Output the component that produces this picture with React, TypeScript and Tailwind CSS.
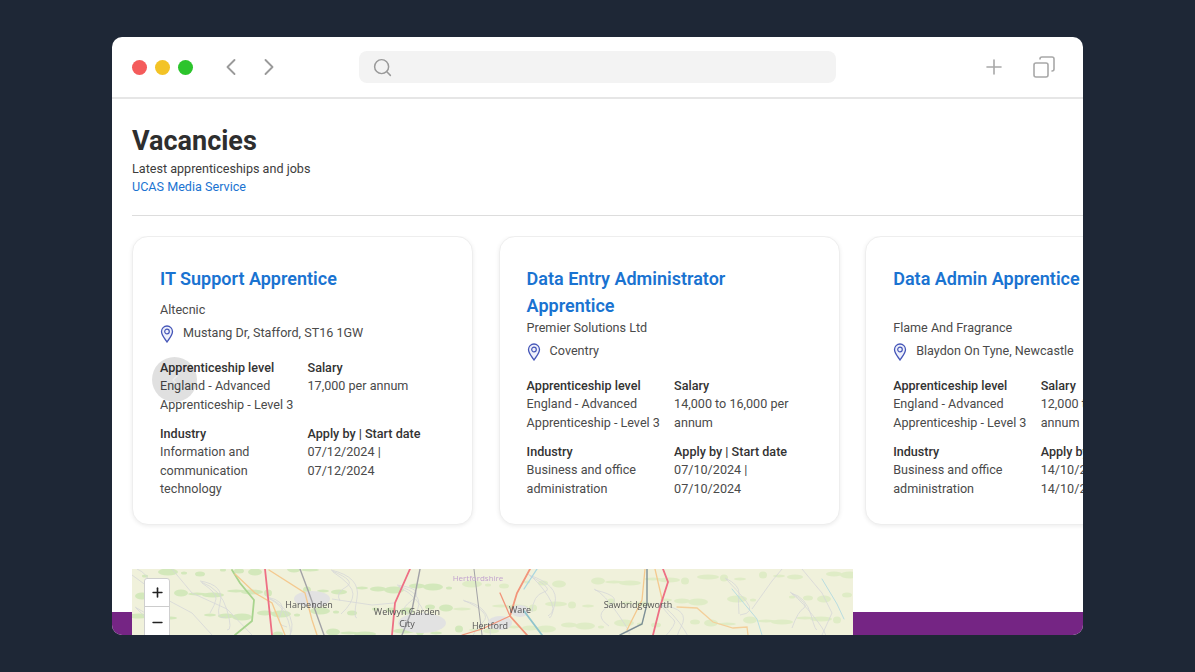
import { ChevronLeft, ChevronRight, Copy, Minus, Plus, Search } from 'lucide-react';

const vacancies = [
  {
    title: 'IT Support Apprentice',
    company: 'Altecnic',
    companyGap: 'mt-[9px]',
    location: 'Mustang Dr, Stafford, ST16 1GW',
    salary: '17,000 per annum',
    industry: 'Information and communication technology',
    dates: '07/12/2024 | 07/12/2024',
  },
  {
    title: 'Data Entry Administrator Apprentice',
    company: 'Premier Solutions Ltd',
    companyGap: 'mt-0',
    location: 'Coventry',
    salary: '14,000 to 16,000 per annum',
    industry: 'Business and office administration',
    dates: '07/10/2024 | 07/10/2024',
  },
  {
    title: 'Data Admin Apprentice',
    company: 'Flame And Fragrance',
    companyGap: 'mt-[27px]',
    location: 'Blaydon On Tyne, Newcastle',
    salary: '12,000 to 14,000 per annum',
    industry: 'Business and office administration',
    dates: '14/10/2024 | 14/10/2024',
  },
];

function PinIcon() {
  return (
    <svg width="14" height="18" viewBox="0 0 14 18" fill="none" className="shrink-0">
      <path
        d="M7 17C5.6 14.6 1.5 10.6 1.5 6.6C1.5 3.4 4 1 7 1s5.500 2.400 5.500 5.600C12.500 10.600 8.400 14.600 7 17Z"
        stroke="#4556b8"
        strokeWidth="1.300"
        fill="#eef0fb"
      />
      <circle cx="7" cy="6.500" r="2.300" stroke="#4556b8" strokeWidth="1.200" />
    </svg>
  );
}

function Field({ label, value }: { label: string; value: string }) {
  return (
    <div>
      <div className="font-medium text-[#333333]">{label}</div>
      <div className="text-[#4a4a4a]">{value}</div>
    </div>
  );
}

function VacancyCard({ vacancy }: { vacancy: (typeof vacancies)[number] }) {
  return (
    <div className="w-[341px] h-[289px] shrink-0 rounded-[16px] bg-white border border-[#eeeeee] shadow-[0_1px_4px_rgba(0,0,0,0.08)] px-[27px] pt-[28px] text-[12.6px] leading-[18.4px]">
      <h2 className="text-[18px] leading-[27px] font-semibold text-[#1a73d1]">{vacancy.title}</h2>
      <div className={`${vacancy.companyGap} text-[#4a4a4a]`}>{vacancy.company}</div>
      <div className="mt-[5px] flex items-center gap-[9px] text-[#4a4a4a]">
        <PinIcon />
        <span>{vacancy.location}</span>
      </div>
      <div className="mt-[16px] grid grid-cols-2 gap-x-[10px] gap-y-[11px]">
        <Field label="Apprenticeship level" value="England - Advanced Apprenticeship - Level 3" />
        <Field label="Salary" value={vacancy.salary} />
        <Field label="Industry" value={vacancy.industry} />
        <Field label="Apply by | Start date" value={vacancy.dates} />
      </div>
    </div>
  );
}

// scattered woodland specks, fixed so the tile is the same every render
const patches = Array.from({ length: 110 }, (_, i) => ({
  cx: (i * 97 + 13) % 721,
  cy: (i * 41 + 7) % 66,
  rx: 3 + (i * 7) % 9,
  ry: 1.5 + (i * 5) % 3,
  denser: (i * 97 + 13) % 721 < 330,
}));

const lanes = Array.from({ length: 30 }, (_, i) => {
  const x = (i * 131 + 5) % 721;
  const y = (i * 29) % 40;
  return `M${x} ${y}q${10 + (i % 5) * 5} ${4 + (i % 4) * 3} ${14 + (i % 3) * 6} ${16 + (i % 3) * 6}t${6 - (i % 4) * 6} ${14 + (i % 2) * 6}`;
});

function MapTile() {
  return (
    <svg viewBox="0 0 721 66" className="block w-full h-full" preserveAspectRatio="none">
      <rect width="721" height="66" fill="#f0f1db" />
      {patches.map((p) => (
        <ellipse key={`${p.cx}-${p.cy}`} cx={p.cx} cy={p.cy} rx={p.rx} ry={p.ry} fill={p.denser ? '#d3e8bb' : '#dfecc6'} />
      ))}
      <g fill="none" stroke="#d6d7d8" strokeWidth="0.800">
        {lanes.map((d) => (
          <path key={d} d={d} />
        ))}
        <path d="M0 6L30 28L60 44L80 66" />
        <path d="M40 0L60 24L95 40L120 66" />
        <path d="M200 30L240 36L262 34" />
        <path d="M620 40L640 12L650 0" />
        <path d="M670 0L690 24L700 44L690 66" />
      </g>
      <ellipse cx="180" cy="30" rx="18" ry="8" fill="#e2e2e2" />
      <ellipse cx="290" cy="54" rx="24" ry="10" fill="#e2e2e2" />
      <ellipse cx="368" cy="54" rx="12" ry="7" fill="#e2e2e2" />
      <ellipse cx="388" cy="42" rx="9" ry="6" fill="#e2e2e2" />
      <g fill="none" strokeLinecap="round">
        <path d="M100 1L108 14L122 31L120 52L103 66" stroke="#a8d48e" strokeWidth="1.800" />
        <path d="M103 5L123 24L140 34L153 66" stroke="#f4c98f" strokeWidth="1.300" />
        <path d="M137 1L173 24L180 51L185 66" stroke="#f4c98f" strokeWidth="1.300" />
        <path d="M168 0L177 24L192 66" stroke="#a2a2a6" strokeWidth="1.400" />
        <path d="M288 0L280 41L270 66" stroke="#a2a2a6" strokeWidth="1.400" />
        <path d="M133 0L140 66" stroke="#ee6f84" strokeWidth="1.800" />
        <path d="M278 0L263 34L260 66" stroke="#ee6f84" strokeWidth="1.800" />
        <path d="M342 0L350 66" stroke="#a2a2a6" strokeWidth="1" />
        <path d="M398 0L385 24L378 47L395 66" stroke="#f2957a" strokeWidth="1.800" />
        <path d="M368 24L378 47L350 60L330 66" stroke="#f2957a" strokeWidth="1.300" />
        <path d="M392 42L410 66" stroke="#8fc4cc" strokeWidth="1.800" />
        <path d="M405 0L392 20" stroke="#a9d6e0" strokeWidth="1.300" />
        <path d="M513 0L510 31L495 61" stroke="#f4c98f" strokeWidth="1.300" />
        <path d="M515 0L515 35L510 55L488 66" stroke="#7d8f96" strokeWidth="1.400" />
        <path d="M523 0L530 30" stroke="#f4c98f" strokeWidth="1.300" />
        <path d="M531 0L536 13L528 38L521 66" stroke="#ee6f84" strokeWidth="1.800" />
        <path d="M545 38L565 39L581 53L601 59L615 58L616 66" stroke="#f4cf9a" strokeWidth="1.300" />
        <path d="M600 20L625 50L630 66" stroke="#b9dde0" strokeWidth="1" />
        <path d="M690 10L705 35L712 50" stroke="#b9dde0" strokeWidth="1" />
      </g>
      <g fontFamily="'Open Sans', sans-serif" fontSize="9" fill="#555555" textAnchor="middle">
        <text x="177" y="39">Harpenden</text>
        <text x="275" y="46">Welwyn Garden</text>
        <text x="275" y="58">City</text>
        <text x="358" y="60">Hertford</text>
        <text x="388" y="44">Ware</text>
        <text x="506" y="39">Sawbridgeworth</text>
        <text x="346" y="12" fill="#c3a3cf" fontSize="8">Hertfordshire</text>
      </g>
    </svg>
  );
}

export default function App() {
  return (
    <div className="h-[672px] w-[1195px] bg-[#1e2736] pt-[37px] pl-[112px] font-['Roboto',sans-serif] overflow-hidden">
      <div className="relative flex h-[598px] w-[971px] flex-col overflow-hidden rounded-[10px] bg-white">
        <div className="flex h-[62px] shrink-0 items-center border-b-2 border-[#e6e6e6] pl-[20px] pr-[27px]">
          <div className="flex gap-[8px]">
            <div className="h-[15px] w-[15px] rounded-full bg-[#f45b5b]" />
            <div className="h-[15px] w-[15px] rounded-full bg-[#f3c326]" />
            <div className="h-[15px] w-[15px] rounded-full bg-[#2cc42c]" />
          </div>
          <div className="ml-[24px] flex gap-[10px] text-[#9a9a9a]">
            <ChevronLeft size={28} strokeWidth={1.6} />
            <ChevronRight size={28} strokeWidth={1.6} />
          </div>
          <div className="ml-[76px] flex h-[32px] w-[477px] items-center rounded-[8px] bg-[#f3f3f3] pl-[13px] text-[#9a9a9a]">
            <Search size={21} strokeWidth={1.7} />
          </div>
          <div className="ml-auto flex items-center gap-[26px] text-[#a8a8a8]">
            <Plus size={24} strokeWidth={1.6} />
            <Copy size={24} strokeWidth={1.6} className="-scale-x-100" />
          </div>
        </div>

        <div className="ml-[20px] mt-[26px] border-b border-[#dddddd] pb-[19px] text-[12.6px] leading-[18px]">
          <h1 className="text-[27px] leading-[32px] font-bold text-[#2e2e2e]">Vacancies</h1>
          <p className="mt-[3px] text-[#3c3c3c]">Latest apprenticeships and jobs</p>
          <a className="text-[#1a73d1]">UCAS Media Service</a>
        </div>

        <div className="mt-[20px] flex shrink-0 gap-[25.6px] overflow-hidden pb-[4px] pl-[20px]">
          {vacancies.map((vacancy) => (
            <VacancyCard key={vacancy.title} vacancy={vacancy} />
          ))}
        </div>

        <div className="relative mt-[40px] min-h-0 flex-1 pl-[20px]">
          <div className="absolute inset-x-0 bottom-0 h-[23px] bg-[#752584]" />
          <div className="relative h-[66px] w-[721px] overflow-hidden blur-[0.5px]">
            <MapTile />
          </div>
          <div className="absolute left-[32px] top-[9px] w-[26px] border border-[#cfcfcf] rounded-t-[3px] bg-white text-[#222222]">
            <div className="flex h-[28px] items-center justify-center border-b border-[#cccccc]">
              <Plus size={15} strokeWidth={2.6} />
            </div>
            <div className="flex h-[30px] items-center justify-center">
              <Minus size={15} strokeWidth={2.6} />
            </div>
          </div>
        </div>

        <div className="absolute left-[40px] top-[320px] flex h-[45px] w-[45px] items-center justify-center rounded-full bg-[#0000001f] text-[#ffffff66]">
          <ChevronLeft size={16} />
        </div>
      </div>
    </div>
  );
}
